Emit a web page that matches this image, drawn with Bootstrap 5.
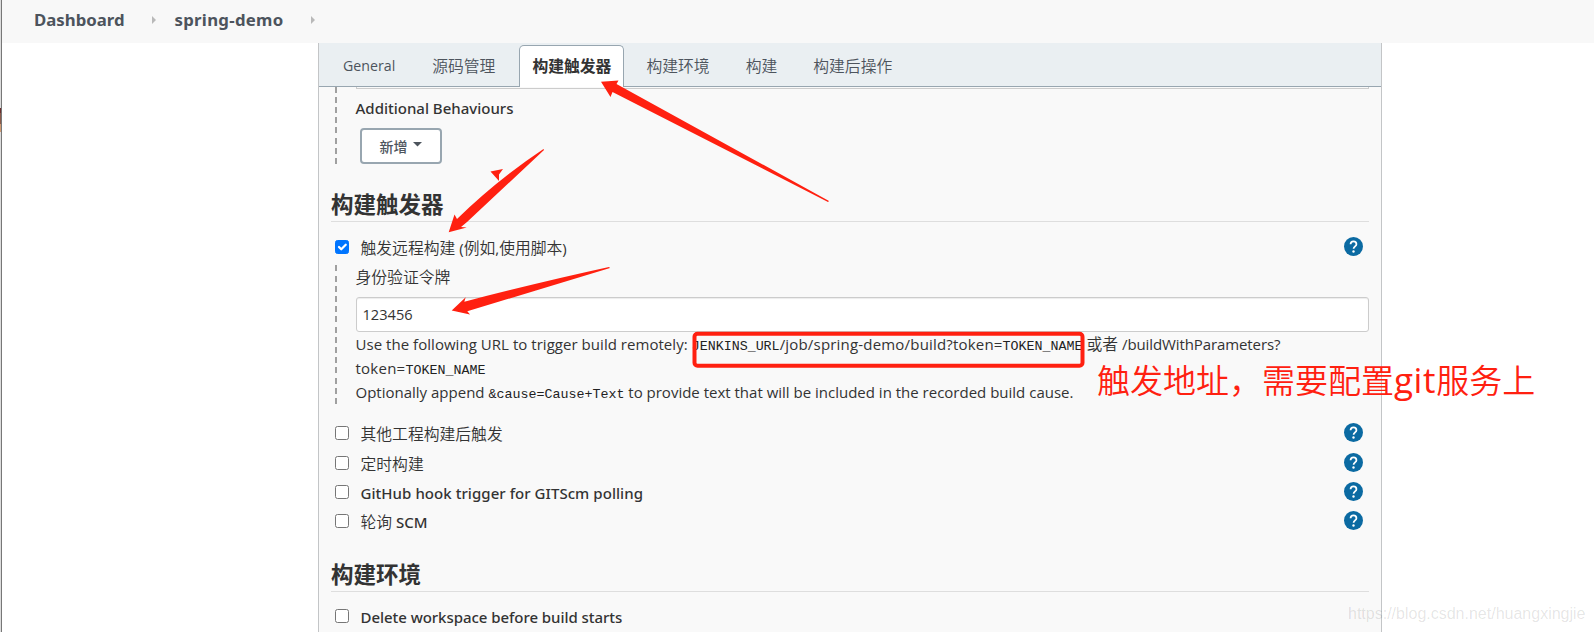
<!DOCTYPE html>
<html lang="zh-CN">
<head>
<meta charset="utf-8">
<meta name="viewport" content="width=device-width, initial-scale=1">
<title>spring-demo Config</title>
<link rel="stylesheet" href="https://cdn.jsdelivr.net/npm/bootstrap@5.3.0/dist/css/bootstrap.min.css">
<style>
  body { font: 15px/24px "Open Sans", "Noto Sans CJK SC", sans-serif; color: #333; background: #fff; height: 632px; overflow: hidden; }
  .zh { font-family: "Noto Sans CJK SC", sans-serif; font-size: 15.8px; font-weight: 350; line-height: 1; }
  .med { font-family: "Noto Sans", sans-serif; font-weight: 500; }
  .page-shell { height: 632px; overflow: hidden; }
  .edge { width: 2px; background: #dcdcdc; border-right: 1px solid #777; }
  .edge-icon { height: 24px; margin-top: 108px; background: linear-gradient(#6b2f2f 0 20%, #8b5a4a 20% 65%, #d09a72 65%); }
  .crumbs { height: 43px; background: #f8f8f8; padding: 0 0 3px 32px; font: 700 16.8px/40px "Noto Sans", sans-serif; color: #4d545d; }
  .crumb-sep { width: 0; height: 0; border: solid transparent; border-width: 4.5px 0 4.5px 4.5px; border-left-color: #b9b9b9; }
  .config { width: 1064px; margin-left: 316px; background: #f9f9f9; border: solid #c3c5c7; border-width: 0 1px; height: 589px; }
  .config-tabs { height: 44px; background: #eaeff2; border-bottom: 1px solid #98a6b0; padding: 2px 0 0 11px; gap: 10px; }
  .config-tabs .nav-link { height: 42px; padding: 0 12px; line-height: 40px; color: #4d545d; border: 1px solid transparent; border-bottom: 0; border-radius: 5px 5px 0 0; white-space: nowrap; }
  .config-tabs .nav-link.active { background: #fff; border-color: #98a6b0; color: #333; font-weight: 700; }
  .config-body { padding: 0 12px 0 12px; }
  .nested { margin-left: 4px; padding-left: 20.5px; position: relative; }
  .nested::before { content: ""; position: absolute; left: 0; top: 0; bottom: 0; width: 2px; background: repeating-linear-gradient(to top, #a0a0a0 0 6px, transparent 6px 10.2px); }
  .field-end { height: 2px; border: 1px solid #ccc; border-top: 0; }
  .btn-add { width: 82px; height: 36px; margin: 10px 0 0 4px; border: 2px solid #98a6b0; border-radius: 4px; background: #fff; color: #4d545d; padding: 0; }
  .btn-add .zh { font-size: 14px; font-weight: 500; }
  .btn-add svg { margin: -4px 0 0 5px; }
  .section-title { font: 700 22.5px/23px "Noto Sans CJK SC", sans-serif; height: 30px; margin: 0; border-bottom: 1px solid #dedede; }
  .opt { height: 29px; padding: 0 6px 0 4px; }
  .opt > span { padding-top: 2px; }
  .opt .form-check-input { width: 14px; height: 14px; margin: 0 11.500px 0 0; border: 1px solid #767676; border-radius: 2.5px; flex: none; background-color: #fff; }
  .opt .form-check-input:checked { background-color: #0075ff; border-color: #0075ff; background-size: 15px 15px; }
  .opt svg { margin-left: auto; }
  .token { height: 35px; border: 1px solid #ccc; border-radius: 3px; padding: 0 6px; font: 14.6px/33px "Open Sans", sans-serif; color: #333; background: #fff; box-shadow: inset 0 1px 1px rgba(0,0,0,.075); }
  .hint { white-space: nowrap; line-height: 24px; }
  .hint code { font: 13.33px/1 "Liberation Mono", monospace; color: #222; }
  .marks { position: absolute; left: 0; top: 0; pointer-events: none; }
  .callout-text { position: absolute; left: 1097px; top: 359px; font: 350 33px/40px "Noto Sans CJK SC", sans-serif; color: #ff2010; white-space: nowrap; }
  .callout-text span { font: 35px/1 "Open Sans", sans-serif; letter-spacing: .6px; }
  .wmark { position: absolute; left: 1348px; top: 602px; font: 16px/24px "Liberation Sans", sans-serif; color: rgba(0,0,0,.11); white-space: nowrap; }
</style>
</head>
<body>
<svg class="d-none"><symbol id="help" viewBox="0 0 24 24"><circle cx="12" cy="12" r="12" fill="#0b6aa2"/><path d="M8.3 9.3c0-2.3 1.600-3.700 3.700-3.700s3.700 1.400 3.700 3.400c0 2.700-3.600 3-3.600 5.900" fill="none" stroke="#fff" stroke-width="2.200"/><circle cx="12" cy="18.300" r="1.500" fill="#fff"/></symbol></svg>
<div class="page-shell d-flex">
  <aside class="edge flex-shrink-0"><div class="edge-icon"></div></aside>
  <div class="flex-grow-1">
    <nav class="crumbs d-flex align-items-center" aria-label="breadcrumb">
      <span style="width:118px">Dashboard</span><i class="crumb-sep"></i>
      <span style="margin-left:18.500px;width:136px;letter-spacing:.28px">spring-demo</span><i class="crumb-sep"></i>
    </nav>
    <main class="config">
      <div class="config-tabs nav flex-nowrap">
        <a class="nav-link" style="font-size:14.200px;margin-right:1px">General</a>
        <a class="nav-link zh" style="margin-right:1px">源码管理</a>
        <a class="nav-link zh active" style="margin-right:-1px">构建触发器</a>
        <a class="nav-link zh">构建环境</a>
        <a class="nav-link zh">构建</a>
        <a class="nav-link zh">构建后操作</a>
      </div>
      <div class="config-body">
        <div class="nested" style="height:77px">
          <div class="field-end"></div>
          <div class="med" style="padding-top:7px">Additional Behaviours</div>
          <button class="btn btn-add d-flex align-items-center justify-content-center" style="margin-top:8px"><span class="zh">新增</span><svg width="9" height="5"><path d="M0 0h9L4.500 4.500z" fill="#4d545d"/></svg></button>
        </div>
        <h2 class="section-title" style="margin-top:28px">构建触发器</h2>
        <div class="opt d-flex align-items-center" style="margin-top:10px"><input class="form-check-input" type="checkbox" checked><span><span class="zh">触发远程构建</span> (<span class="zh">例如</span>,<span class="zh">使用脚本</span>)</span><svg width="19" height="19"><use href="#help"/></svg></div>
        <div class="nested" style="height:142px;margin-top:1px">
          <div class="zh" style="line-height:24px;padding-top:3px;height:35px">身份验证令牌</div>
          <div class="token">123456</div>
          <div class="hint"><span style="letter-spacing:.04px">Use the following URL to trigger build remotely: </span><code>JENKINS_URL</code><span style="letter-spacing:.19px">/job/spring-demo/build?token=</span><code>TOKEN_NAME</code> <span class="zh">或者</span> <span style="letter-spacing:-.1px">/buildWithParameters?</span></div>
          <div class="hint"><span style="letter-spacing:.25px">token=</span><code>TOKEN_NAME</code></div>
          <div class="hint">Optionally append <code>&amp;cause=Cause+Text</code> to provide text that will be included in the recorded build cause.</div>
        </div>
        <div class="opt d-flex align-items-center" style="margin-top:14px"><input class="form-check-input" type="checkbox"><span class="zh">其他工程构建后触发</span><svg width="19" height="19"><use href="#help"/></svg></div>
        <div class="opt d-flex align-items-center" style="margin-top:1px"><input class="form-check-input" type="checkbox"><span class="zh">定时构建</span><svg width="19" height="19"><use href="#help"/></svg></div>
        <div class="opt d-flex align-items-center"><input class="form-check-input" type="checkbox"><span class="med" style="letter-spacing:.05px">GitHub hook trigger for GITScm polling</span><svg width="19" height="19"><use href="#help"/></svg></div>
        <div class="opt d-flex align-items-center"><input class="form-check-input" type="checkbox"><span class="med"><span class="zh">轮询</span> SCM</span><svg width="19" height="19"><use href="#help"/></svg></div>
        <h2 class="section-title" style="margin-top:27px">构建环境</h2>
        <div class="opt d-flex align-items-center" style="margin-top:9px"><input class="form-check-input" type="checkbox"><span class="med" style="letter-spacing:-.05px">Delete workspace before build starts</span></div>
      </div>
    </main>
  </div>
</div>
<svg class="marks" width="1594" height="632">
  <g fill="#ff2010">
    <path d="M601 81.700L618.500 80.500 616.500 84 829 201 828 202 612.500 92 610.500 97z"/>
    <path d="M448.700 232.300L454.500 214.500 457 219Q497 180 543.500 149L544 150 467 222 461 227 466.700 227.500z"/>
    <path d="M490.500 171.500L503 169 499 174.500 499 181z"/>
    <path d="M451.700 310.500L465.700 297.300 464.300 301.700Q540 282 609 267L610 268 467.300 311.300 470 314.500z"/>
  </g>
  <rect x="694.500" y="333.700" width="388" height="32" rx="3" fill="none" stroke="#ff2010" stroke-width="4"/>
</svg>
<div class="callout-text">触发地址，需要配置<span>git</span>服务上</div>
<div class="wmark">https://blog.csdn.net/huangxingjie</div>
<script src="https://cdn.jsdelivr.net/npm/bootstrap@5.3.0/dist/js/bootstrap.bundle.min.js"></script>
</body>
</html>
